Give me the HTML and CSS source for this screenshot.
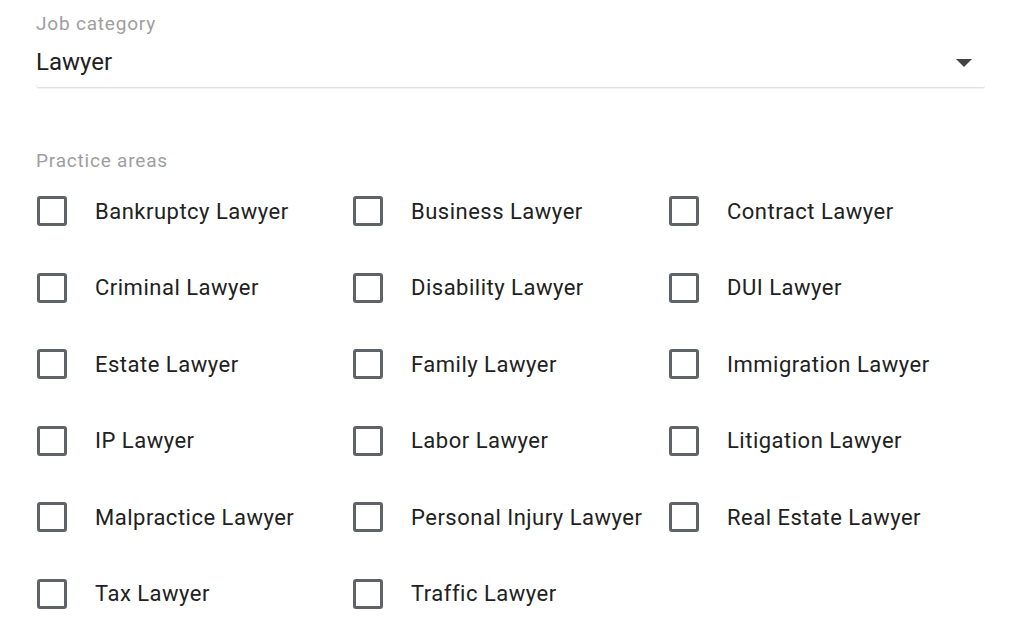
FILE: index.html
```html
<!DOCTYPE html>
<html>
<head>
<meta charset="utf-8">
<link rel="stylesheet" href="styles.css">
</head>
<body>
<div class="page">
  <div class="field">
    <div class="field-label">Job category</div>
    <div class="select">
      <span class="select-value">Lawyer</span>
      <svg class="arrow" width="16" height="8" viewBox="0 0 16 8"><path d="M0 0 L16 0 L8 8 Z" fill="#444"/></svg>
    </div>
  </div>
  <div class="group">
    <div class="group-label">Practice areas</div>
    <div class="grid">
      <label class="item"><span class="box"></span><span class="text">Bankruptcy Lawyer</span></label>
      <label class="item"><span class="box"></span><span class="text">Business Lawyer</span></label>
      <label class="item"><span class="box"></span><span class="text">Contract Lawyer</span></label>
      <label class="item"><span class="box"></span><span class="text">Criminal Lawyer</span></label>
      <label class="item"><span class="box"></span><span class="text">Disability Lawyer</span></label>
      <label class="item"><span class="box"></span><span class="text">DUI Lawyer</span></label>
      <label class="item"><span class="box"></span><span class="text">Estate Lawyer</span></label>
      <label class="item"><span class="box"></span><span class="text">Family Lawyer</span></label>
      <label class="item"><span class="box"></span><span class="text">Immigration Lawyer</span></label>
      <label class="item"><span class="box"></span><span class="text">IP Lawyer</span></label>
      <label class="item"><span class="box"></span><span class="text">Labor Lawyer</span></label>
      <label class="item"><span class="box"></span><span class="text">Litigation Lawyer</span></label>
      <label class="item"><span class="box"></span><span class="text">Malpractice Lawyer</span></label>
      <label class="item"><span class="box"></span><span class="text">Personal Injury Lawyer</span></label>
      <label class="item"><span class="box"></span><span class="text">Real Estate Lawyer</span></label>
      <label class="item"><span class="box"></span><span class="text">Tax Lawyer</span></label>
      <label class="item"><span class="box"></span><span class="text">Traffic Lawyer</span></label>
    </div>
  </div>
</div>
</body>
</html>
```
FILE: styles.css
```css
html, body {
  margin: 0;
  padding: 0;
  background: #fff;
}
body {
  font-family: Roboto, "Liberation Sans", sans-serif;
  color: #212121;
  overflow: hidden;
}
.page {
  padding: 10px 39px 0 36px;
}
.field {
  display: flex;
  flex-direction: column;
}
.field-label {
  font-size: 19px;
  line-height: 28px;
  letter-spacing: 0.8px;
  color: #9e9e9e;
}
.select {
  display: flex;
  align-items: center;
  justify-content: space-between;
  height: 51px;
  border-bottom: 1.5px solid #e0e0e0;
  border-radius: 0 0 3px 3px;
  box-shadow: 0 1px 1px rgba(0,0,0,0.06);
  margin-top: -2px;
}
.select-value {
  font-size: 24px;
  line-height: 28px;
}
.arrow {
  margin-right: 13px;
  margin-top: 2px;
}
.group {
  margin-top: 59px;
}
.group-label {
  font-size: 19px;
  line-height: 28px;
  letter-spacing: 0.8px;
  color: #9e9e9e;
}
.grid {
  display: grid;
  grid-template-columns: repeat(3, 316px);
  grid-auto-rows: 76.5px;
  margin-top: -2px;
}
.item {
  display: flex;
  align-items: center;
}
.box {
  width: 24px;
  height: 24px;
  border: 3px solid #5f6368;
  border-radius: 3px;
  flex: none;
  margin-left: 1px;
}
.text {
  margin-left: 28px;
  font-size: 22px;
  letter-spacing: 0.5px;
  color: #212121;
}
```
